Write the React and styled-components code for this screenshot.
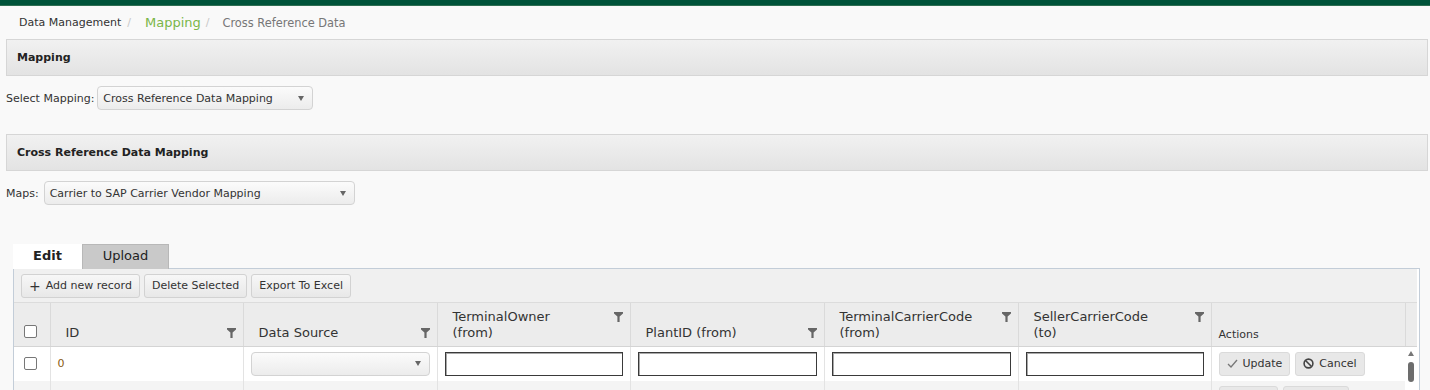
import React from "react";
import styled, { createGlobalStyle } from "styled-components";

const GlobalStyle = createGlobalStyle`
  html, body {
    margin: 0;
    padding: 0;
    background: #f9f9f9;
    font-family: "DejaVu Sans", Verdana, sans-serif;
    color: #333;
  }
`;

const TopBar = styled.div`
  height: 5px;
  background: #00533a;
  border-bottom: 1px solid #2f6e52;
`;

const Page = styled.div`
  padding: 0 2px 0 6px;
`;

const Breadcrumb = styled.div`
  display: flex;
  align-items: center;
  height: 33px;
  padding-left: 13px;
  font-size: 11px;
`;

const Crumb = styled.span`
  color: ${(p) => p.color || "#333"};
  font-size: ${(p) => p.size || "11px"};
`;

const Sep = styled.span`
  color: #c8c8c8;
  margin: 0 ${(p) => p.after || 14}px 0 ${(p) => p.before || 6}px;
`;

const PanelHeader = styled.div`
  height: 35px;
  display: flex;
  align-items: center;
  padding-left: 10px;
  border: 1px solid #d6d6d6;
  background: linear-gradient(#f1f1f1, #e3e3e3);
  font-size: 11px;
  font-weight: bold;
  color: #222;
`;

const FieldRow = styled.div`
  display: flex;
  align-items: center;
  gap: ${(p) => p.gap || 3}px;
  margin-top: 10px;
  height: 24px;
  font-size: 11px;
`;

const Dropdown = styled.div`
  box-sizing: border-box;
  width: ${(p) => p.width}px;
  height: 24px;
  display: flex;
  align-items: center;
  justify-content: space-between;
  padding: 0 8px 0 5px;
  border: 1px solid #d3d3d3;
  border-radius: 4px;
  background: linear-gradient(#fbfbfb, #ececec);
  font-size: 11px;
  color: #333;
`;

const Caret = styled.span`
  width: 0;
  height: 0;
  border-left: 3px solid transparent;
  border-right: 3px solid transparent;
  border-top: 5px solid #666;
`;

const Spacer = styled.div`
  height: 24px;
`;

const TabArea = styled.div`
  margin: 39px 0 0 7px;
  width: 1407px;
`;

const TabStrip = styled.div`
  display: flex;
  height: 24px;
`;

const Tab = styled.div`
  box-sizing: border-box;
  width: ${(p) => p.width}px;
  height: 25px;
  display: flex;
  align-items: center;
  justify-content: center;
  padding-bottom: 3px;
  font-size: 13px;
  font-weight: ${(p) => (p.active ? "bold" : "normal")};
  color: #222;
  background: ${(p) => (p.active ? "#fff" : "#c9c9c9")};
  border: 1px solid ${(p) => (p.active ? "#fff" : "#b8b8b8")};
  border-bottom: none;
  position: relative;
  z-index: 1;
`;

const TabContent = styled.div`
  border: 1px solid #c3cdd8;
  border-bottom: none;
  background: #fff;
  height: 122px;
  overflow: hidden;
`;

const Grid = styled.div`
  width: 1403px;
`;

const Toolbar = styled.div`
  height: 34px;
  display: flex;
  align-items: center;
  gap: 4px;
  padding-left: 7px;
  background: #f0f0f0;
  border-bottom: 1px solid #dcdcdc;
  box-sizing: border-box;
`;

const ToolButton = styled.div`
  height: 24px;
  display: flex;
  align-items: center;
  gap: 5px;
  padding: 0 7px;
  border: 1px solid #d2d2d2;
  border-radius: 3px;
  background: linear-gradient(#f7f7f7, #e8e8e8);
  font-size: 11px;
  color: #333;
  box-sizing: border-box;
`;

const Plus = styled.span`
  font-size: 14px;
  line-height: 10px;
`;

const Table = styled.table`
  border-collapse: collapse;
  table-layout: fixed;
  width: 1403px;
`;

const HeadRow = styled.tr`
  height: 43px;
`;

const HeadCell = styled.th`
  padding: 0 7px 5px 15px;
  vertical-align: bottom;
  text-align: left;
  font-weight: normal;
  font-size: 13px;
  color: #333;
  background: #ececec;
  border-left: 1px solid #dadada;
  border-bottom: 1px solid #d4d4d4;
  &:first-child {
    border-left: none;
    padding: 0 0 8px 8px;
  }
  &:last-child {
    padding: 0;
  }
`;

const ActionsHead = styled(HeadCell)`
  padding-left: 7px;
  font-size: 11px;
`;

const HeadInner = styled.div`
  display: flex;
  justify-content: space-between;
  align-items: flex-start;
  line-height: 16px;
`;

const BodyRow = styled.tr`
  height: 35px;
`;

const Cell = styled.td`
  padding: 0 7px;
  font-size: 11px;
  color: #444;
  vertical-align: ${(p) => (p.top ? "top" : "middle")};
  padding-top: ${(p) => (p.top ? "5px" : "0")};
  border-left: 1px solid #e3e3e3;
  background: ${(p) => (p.alt ? "#f4f4f4" : "#fff")};
  &:first-child {
    border-left: none;
    padding-left: 8px;
  }
`;

const IdText = styled.span`
  color: #8a5a12;
`;

const Check = styled.span`
  display: block;
  width: 11px;
  height: 11px;
  border: 1px solid #777;
  border-radius: 2px;
  background: #fff;
  margin-left: 2px;
`;

const TextBox = styled.div`
  box-sizing: border-box;
  height: 24px;
  width: 100%;
  border: 1px solid #3a3a3a;
  box-shadow: inset 1px 1px 0 #a8a8a8;
  background: #fff;
`;

const RowButton = styled.div`
  display: inline-flex;
  align-items: center;
  gap: 5px;
  height: 24px;
  width: ${(p) => (p.width ? `${p.width}px` : "auto")};
  padding: 0 7px;
  margin-right: 5px;
  border: 1px solid #dadada;
  border-radius: 3px;
  background: #e8e8e8;
  font-size: 11px;
  color: #333;
  box-sizing: border-box;
  vertical-align: top;
`;

const ScrollCell = styled.td`
  background: #fff;
  vertical-align: top;
  padding: 0;
`;

const ScrollArrow = styled.div`
  margin: 4px auto 0;
  width: 0;
  height: 0;
  border-left: 3px solid transparent;
  border-right: 3px solid transparent;
  border-bottom: 5px solid #777;
`;

const ScrollThumb = styled.div`
  margin: 6px auto 0;
  width: 6px;
  height: 20px;
  border-radius: 3px;
  background: #6d6d6d;
`;

const Filter = () => (
  <svg width="9" height="10" viewBox="0 0 9 10" style={{ flexShrink: 0, marginTop: 3 }}>
    <path d="M0 0h9v1.5L5.6 4.5V10H3.4V4.5L0 1.5z" fill="#666" />
  </svg>
);

const CheckIcon = () => (
  <svg width="11" height="9" viewBox="0 0 11 9">
    <path d="M1 5l3 3 6-7" fill="none" stroke="#777" strokeWidth="1.3" />
  </svg>
);

const CancelIcon = () => (
  <svg width="11" height="11" viewBox="0 0 11 11">
    <circle cx="5.5" cy="5.5" r="4.4" fill="none" stroke="#444" strokeWidth="1.6" />
    <path d="M2.5 2.5l6 6" stroke="#444" strokeWidth="1.6" />
  </svg>
);

const columns = [
  { title: "ID" },
  { title: "Data Source" },
  { title: "TerminalOwner", sub: "(from)" },
  { title: "PlantID (from)" },
  { title: "TerminalCarrierCode", sub: "(from)" },
  { title: "SellerCarrierCode", sub: "(to)" },
];

const widths = [36, 193, 194, 193, 194, 194, 193, 194, 12];

export default function App() {
  return (
    <>
      <GlobalStyle />
      <TopBar />
      <Page>
        <Breadcrumb>
          <Crumb>Data Management</Crumb>
          <Sep after={14}>/</Sep>
          <Crumb color="#7ab648" size="13px">Mapping</Crumb>
          <Sep before={5} after={13}>/</Sep>
          <Crumb color="#777" size="11.4px">Cross Reference Data</Crumb>
        </Breadcrumb>

        <PanelHeader>Mapping</PanelHeader>
        <FieldRow>
          <span>Select Mapping:</span>
          <Dropdown width={216}>
            Cross Reference Data Mapping <Caret />
          </Dropdown>
        </FieldRow>

        <Spacer />
        <PanelHeader>Cross Reference Data Mapping</PanelHeader>
        <FieldRow gap={5}>
          <span>Maps:</span>
          <Dropdown width={311}>
            Carrier to SAP Carrier Vendor Mapping <Caret />
          </Dropdown>
        </FieldRow>

        <TabArea>
          <TabStrip>
            <Tab active width={69}>Edit</Tab>
            <Tab width={87}>Upload</Tab>
          </TabStrip>
          <TabContent>
            <Grid>
              <Toolbar>
                <ToolButton>
                  <Plus>+</Plus> Add new record
                </ToolButton>
                <ToolButton>Delete Selected</ToolButton>
                <ToolButton>Export To Excel</ToolButton>
              </Toolbar>
              <Table>
                <colgroup>
                  {widths.map((w, i) => (
                    <col key={i} style={{ width: w }} />
                  ))}
                </colgroup>
                <thead>
                  <HeadRow>
                    <HeadCell>
                      <Check />
                    </HeadCell>
                    {columns.map((c) => (
                      <HeadCell key={c.title}>
                        <HeadInner>
                          <span>
                            {c.title}
                            {c.sub && <br />}
                            {c.sub}
                          </span>
                          <Filter />
                        </HeadInner>
                      </HeadCell>
                    ))}
                    <ActionsHead>Actions</ActionsHead>
                    <HeadCell />
                  </HeadRow>
                </thead>
                <tbody>
                  <BodyRow>
                    <Cell>
                      <Check />
                    </Cell>
                    <Cell>
                      <IdText>0</IdText>
                    </Cell>
                    <Cell>
                      <Dropdown width={179}>
                        <span />
                        <Caret />
                      </Dropdown>
                    </Cell>
                    <Cell>
                      <TextBox />
                    </Cell>
                    <Cell>
                      <TextBox />
                    </Cell>
                    <Cell>
                      <TextBox />
                    </Cell>
                    <Cell>
                      <TextBox />
                    </Cell>
                    <Cell>
                      <RowButton>
                        <CheckIcon /> Update
                      </RowButton>
                      <RowButton>
                        <CancelIcon /> Cancel
                      </RowButton>
                    </Cell>
                    <ScrollCell rowSpan={2}>
                      <ScrollArrow />
                      <ScrollThumb />
                    </ScrollCell>
                  </BodyRow>
                  <BodyRow>
                    <Cell alt />
                    <Cell alt />
                    <Cell alt />
                    <Cell alt />
                    <Cell alt />
                    <Cell alt />
                    <Cell alt />
                    <Cell alt top>
                      <RowButton width={59} />
                      <RowButton width={66} />
                    </Cell>
                  </BodyRow>
                </tbody>
              </Table>
            </Grid>
          </TabContent>
        </TabArea>
      </Page>
    </>
  );
}
